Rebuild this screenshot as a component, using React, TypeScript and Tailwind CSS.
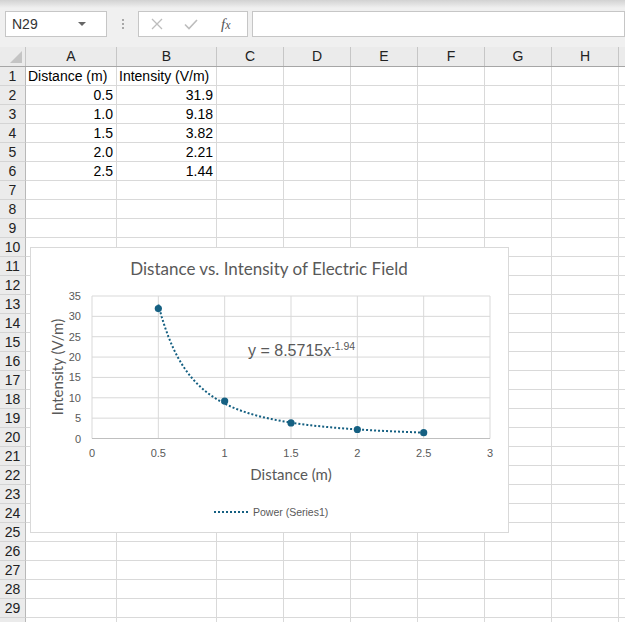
import React from "react";

const COLS = [
  { l: "A", w: 91 },
  { l: "B", w: 100 },
  { l: "C", w: 67 },
  { l: "D", w: 67 },
  { l: "E", w: 67 },
  { l: "F", w: 67 },
  { l: "G", w: 67 },
  { l: "H", w: 67 },
  { l: "", w: 67 },
];

const DATA: Record<number, [string, string, boolean]> = {
  1: ["Distance (m)", "Intensity (V/m)", false],
  2: ["0.5", "31.9", true],
  3: ["1.0", "9.18", true],
  4: ["1.5", "3.82", true],
  5: ["2.0", "2.21", true],
  6: ["2.5", "1.44", true],
};

const PTS: [number, number][] = [
  [0.5, 31.9],
  [1, 9.18],
  [1.5, 3.82],
  [2, 2.21],
  [2.5, 1.44],
];

const X = (v: number) => 61 + v * 132.67;
const Y = (v: number) => 190.5 - v * (142.5 / 35);

function Chart() {
  const trend: string[] = [];
  for (let i = 0; i <= 80; i++) {
    const x = 0.5 + (2 * i) / 80;
    const y = 8.5715 * Math.pow(x, -1.94);
    trend.push(`${i === 0 ? "M" : "L"}${X(x).toFixed(2)},${Y(y).toFixed(2)}`);
  }
  const xt = [0, 0.5, 1, 1.5, 2, 2.5, 3];
  const yt = [0, 5, 10, 15, 20, 25, 30, 35];
  const fmt = (v: number) => (Number.isInteger(v) ? String(v) : v.toFixed(1));
  return (
    <div className="absolute left-[30px] top-[247px] w-[479px] h-[286px] border border-[#d9d9d9] bg-white">
      <svg width="477" height="284" className="block">
        {xt.map((v) => (
          <line key={"vx" + v} x1={X(v)} x2={X(v)} y1={Y(35)} y2={Y(0)} stroke="#d9d9d9" strokeWidth="1" />
        ))}
        {yt.slice(1).map((v) => (
          <line key={"hy" + v} x1={X(0)} x2={X(3)} y1={Y(v)} y2={Y(v)} stroke="#d9d9d9" strokeWidth="1" />
        ))}
        <line x1={X(0)} x2={X(3)} y1={Y(0)} y2={Y(0)} stroke="#bfbfbf" strokeWidth="1" />
        <path d={trend.join(" ")} fill="none" stroke="#156082" strokeWidth="2" strokeDasharray="2 2" />
        {PTS.map(([x, y]) => (
          <circle key={x} cx={X(x)} cy={Y(y)} r="3.6" fill="#156082" />
        ))}
        <g fontFamily="'Liberation Sans', Arial, sans-serif" fontSize="11" fill="#595959">
          {yt.map((v) => (
            <text key={"yl" + v} x={50} y={Y(v) + 4} textAnchor="end">
              {v}
            </text>
          ))}
          {xt.map((v) => (
            <text key={"xl" + v} x={X(v)} y={209} textAnchor="middle">
              {fmt(v)}
            </text>
          ))}
        </g>
        <text x={238} y={27} textAnchor="middle" fontFamily="Lato, sans-serif" fontSize="17" fill="#595959">
          Distance vs. Intensity of Electric Field
        </text>
        <text x={260} y={232} textAnchor="middle" fontFamily="Lato, sans-serif" fontSize="15" fill="#595959">
          Distance (m)
        </text>
        <text
          x={0}
          y={0}
          transform="translate(26 119) rotate(-90)"
          textAnchor="middle"
          dominantBaseline="central"
          fontFamily="Lato, sans-serif"
          fontSize="15"
          fill="#595959"
        >
          Intensity (V/m)
        </text>
        <text x={217} y={108} fontFamily="'Liberation Sans', Arial, sans-serif" fontSize="16" fill="#595959">
          y = 8.5715x
          <tspan fontSize="10.5" dy="-6">-1.94</tspan>
        </text>
        <line x1={183} x2={217} y1={264} y2={264} stroke="#156082" strokeWidth="2" strokeDasharray="2 2" />
        <text x={222} y={268} fontFamily="'Liberation Sans', Arial, sans-serif" fontSize="10.5" fill="#595959">
          Power (Series1)
        </text>
      </svg>
    </div>
  );
}

export default function App() {
  const rows = Array.from({ length: 30 }, (_, i) => i + 1);
  return (
    <div
      className="relative w-[625px] h-[622px] overflow-hidden bg-white text-[#222]"
      style={{ fontFamily: "'Liberation Sans', Arial, sans-serif" }}
    >
      {/* top toolbar */}
      <div className="h-[47px] bg-[#f0f0f0] relative">
        <div className="h-[8px] bg-gradient-to-b from-[#d2d2d2] to-[#f0f0f0]" />
        <div className="flex items-start pt-[3px] pl-[5px]">
          <div className="w-[102px] h-[26px] bg-white border border-[#c6c6c6] flex items-center justify-between pl-[6px] pr-[20px]">
            <span className="text-[14px] text-[#333]">N29</span>
            <span className="w-0 h-0 border-l-[4px] border-r-[4px] border-t-[4px] border-l-transparent border-r-transparent border-t-[#666]" />
          </div>
          <div className="w-[31px] h-[26px] flex flex-col items-center justify-center gap-[2px]">
            <span className="w-[2px] h-[2px] bg-[#a8a8a8]" />
            <span className="w-[2px] h-[2px] bg-[#a8a8a8]" />
            <span className="w-[2px] h-[2px] bg-[#a8a8a8]" />
          </div>
          <div className="w-[110px] h-[26px] bg-white border border-[#c6c6c6] flex items-center pl-[11px]">
            <svg width="14" height="14" viewBox="0 0 14 14">
              <path d="M2 2 L12 12 M12 2 L2 12" stroke="#bdbdbd" strokeWidth="1.3" fill="none" />
            </svg>
            <svg width="16" height="14" viewBox="0 0 16 14" className="ml-[19px]">
              <path d="M2 7.5 L6 11.5 L14 3" stroke="#bdbdbd" strokeWidth="1.6" fill="none" />
            </svg>
            <span
              className="ml-[22px] text-[15px] italic text-[#555]"
              style={{ fontFamily: "'Liberation Serif', 'Times New Roman', serif" }}
            >
              f<span className="text-[12px]">x</span>
            </span>
          </div>
          <div className="ml-[4px] flex-1 h-[26px] bg-white border border-[#c6c6c6]" />
        </div>
      </div>

      {/* header row */}
      <div className="flex h-[20px] bg-[#ebebeb] border-b border-[#a6a6a6]">
        <div className="w-[26px] shrink-0 border-r border-[#c6c6c6] relative">
          <div className="absolute left-[10px] top-[4px] w-0 h-0 border-b-[12px] border-l-[12px] border-l-transparent border-b-[#c4c4c4]" />
        </div>
        {COLS.map((c, i) => (
          <div
            key={i}
            className="shrink-0 border-r border-[#c6c6c6] flex items-center justify-center text-[14px] text-[#222]"
            style={{ width: c.w }}
          >
            {c.l}
          </div>
        ))}
      </div>

      {/* rows */}
      {rows.map((r) => {
        const d = DATA[r];
        return (
          <div key={r} className="flex h-[19px]">
            <div className="w-[26px] shrink-0 bg-[#ebebeb] border-r border-[#b8b8b8] border-b border-b-[#d4d4d4] flex items-center justify-center text-[14px] text-[#222]">
              {r < 30 ? r : ""}
            </div>
            {COLS.map((c, i) => {
              let txt = "";
              if (d && i === 0) txt = d[0];
              if (d && i === 1) txt = d[1];
              return (
                <div
                  key={i}
                  className={
                    "shrink-0 border-r border-b border-[#d9d9d9] flex items-center text-[14px] text-black whitespace-nowrap overflow-visible " +
                    (d && d[2] ? "justify-end pr-[3px]" : "justify-start pl-[2px]")
                  }
                  style={{ width: c.w }}
                >
                  {txt}
                </div>
              );
            })}
          </div>
        );
      })}

      <Chart />
    </div>
  );
}
